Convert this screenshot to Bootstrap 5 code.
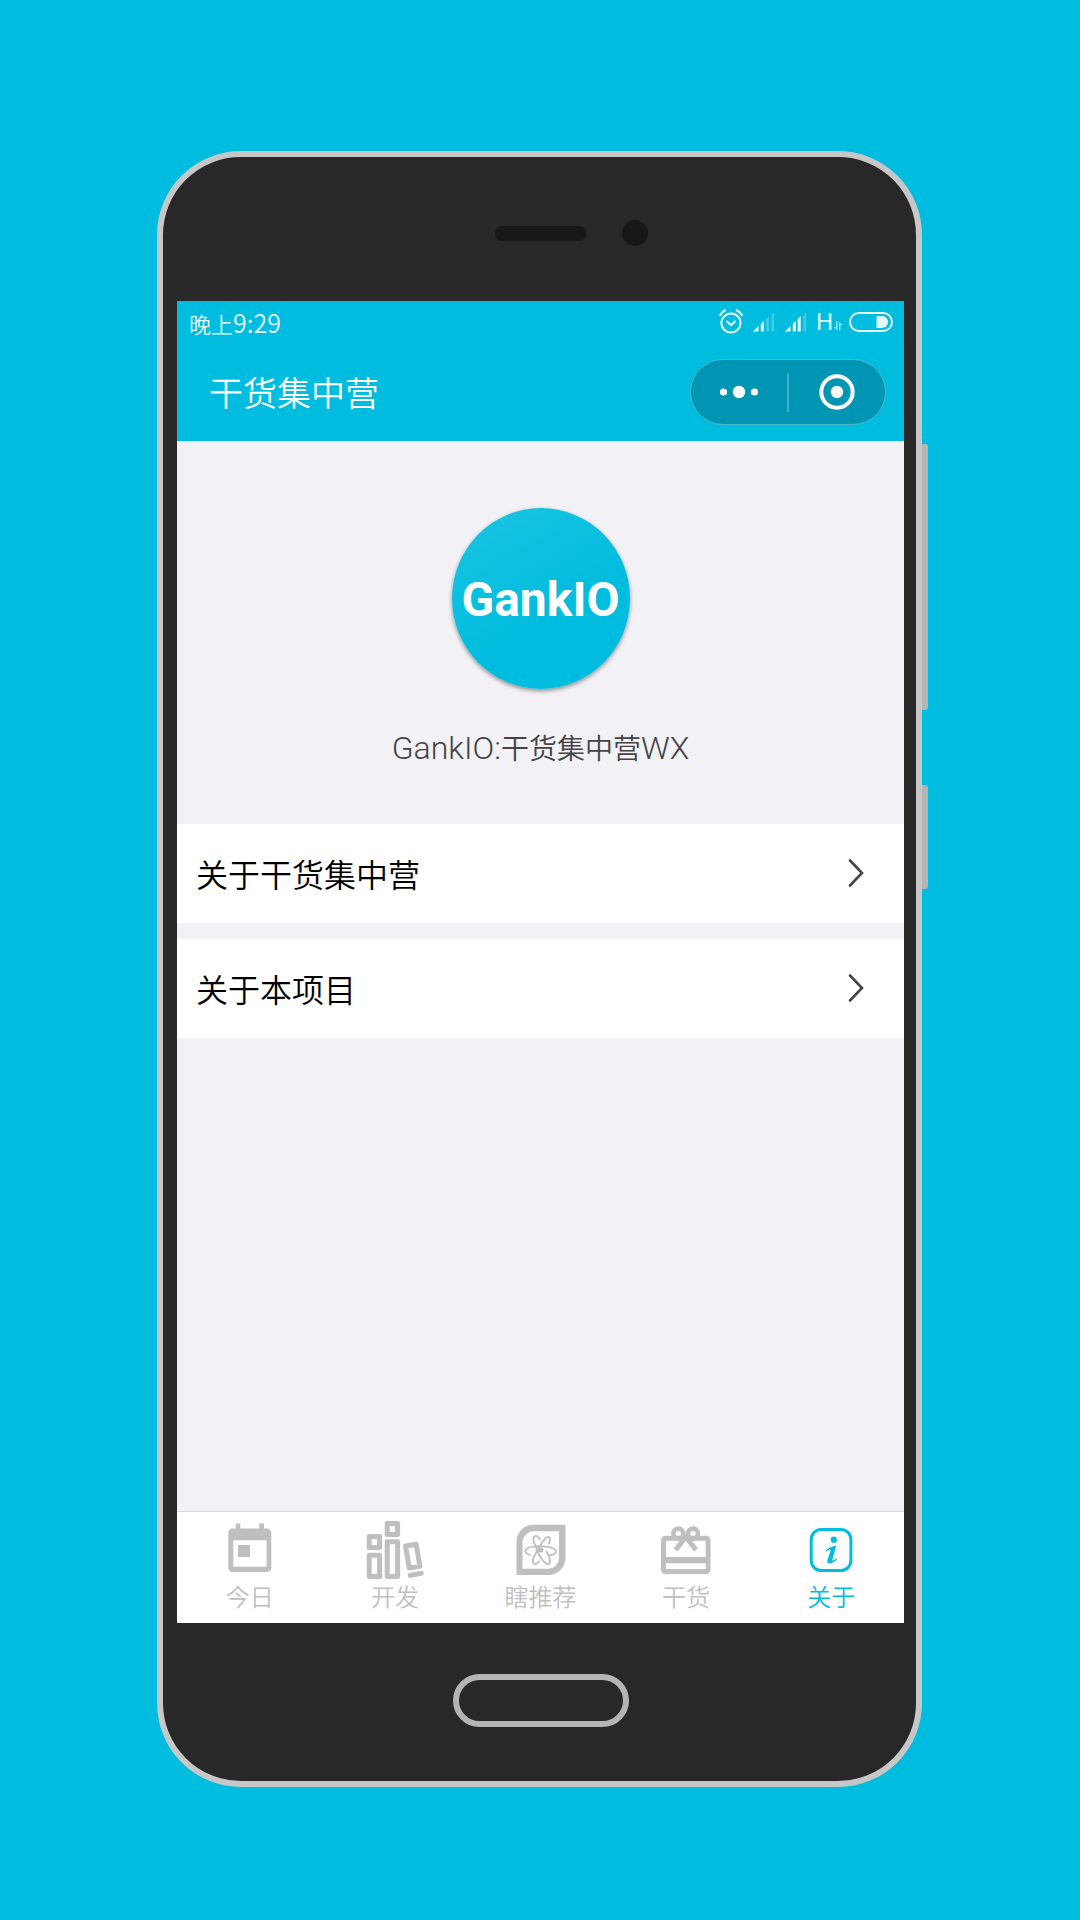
<!DOCTYPE html>
<html lang="zh-CN">
<head>
<meta charset="utf-8">
<meta name="viewport" content="width=device-width, initial-scale=1">
<title>干货集中营</title>
<link href="https://cdn.jsdelivr.net/npm/bootstrap@5.3.0/dist/css/bootstrap.min.css" rel="stylesheet">
<style>
  :root { --gank: #00bcde; --bezel: #282828; --muted-tab: #bfbfbf; }
  body { background: var(--gank); font-family: "Noto Sans CJK SC", sans-serif; font-weight: 350; }
  .stage { min-height: 100vh; padding: 151px 158px 133px 157px; }
  .handset { background: var(--bezel); border: 6px solid #c7c7c7; border-radius: 84px; padding: 0 12px 0 14px; }
  .side-key { left: calc(100% + 6px); width: 6px; background: #b5b5b5; border-radius: 0 3px 3px 0; }
  .volume-key { top: 287px; height: 266px; }
  .power-key { top: 628px; height: 104px; }
  .forehead { display: grid; grid-template-columns: 1fr auto 1fr; align-items: center; height: 144px; padding-top: 8px; }
  .earpiece { grid-column: 2; width: 91px; height: 15px; border-radius: 7px; background: #171717; }
  .lens { width: 26px; height: 26px; margin-left: 36px; border-radius: 50%; background: #171717; }
  .chin { height: 158px; padding-bottom: 4px; }
  .home-key { width: 176px; height: 53px; border: 6px solid #b5b5b5; border-radius: 27px; background: transparent; }
  .app-screen { background: #f1f1f6; }
  .app-top { background: var(--gank); color: #fff; height: 140px; }
  .status-line { height: 42px; padding: 0 10px 0 12px; font-size: 22px; line-height: 42px; color: #e8f9fc; }
  .status-line .digits { font-size: 25px; }
  .net-type { font-family: Roboto, sans-serif; font-size: 24px; font-weight: 400; }
  .title-line { height: 98px; padding: 0 18px 0 32px; }
  .app-title { font-size: 34px; line-height: 50px; font-weight: 350; margin: 0; }
  .capsule { width: 196px; height: 66px; border: 1px solid #4db5ca; border-radius: 33px; background: #0095b2; }
  .capsule button { border: 0; background: transparent; padding: 0; line-height: 0; flex: 1 1 0; }
  .capsule .split { width: 2px; height: 39px; background: #40b0c6; }
  .profile { height: 383px; padding-top: 67px; }
  .logo-disc { width: 178px; height: 181px; border-radius: 50%; background: linear-gradient(150deg, #1cc4e2, var(--gank) 60%); box-shadow: 0 2px 4px rgba(0,0,0,.4); color: #fff; font: 700 48px/60px Roboto, sans-serif; padding-top: 3px; }
  .app-name { margin: 37px 0 0; font-size: 28px; line-height: 42px; color: #444; }
  .app-name .latin { font-family: Roboto, sans-serif; font-size: 32px; font-weight: 300; }
  .menu-row { height: 99px; padding: 0 40px 2px 19px; background: #fff; color: #000; font-size: 32px; }
  .menu-row svg { color: #444; }
  .tab-strip { height: 112px; background: #fff; border-top: 1px solid #d9d9dc; }
  .tab-strip a { color: var(--muted-tab); font-size: 24px; line-height: 32px; padding-top: 8px; }
  .tab-strip a.active { color: var(--gank); }
  svg { display: block; fill: currentColor; }
  .line-art { fill: none; stroke: currentColor; }
</style>
</head>
<body>
<div class="stage d-flex">
  <div class="handset position-relative flex-fill d-flex flex-column">
    <div class="side-key volume-key position-absolute"></div>
    <div class="side-key power-key position-absolute"></div>
    <div class="forehead"><div class="earpiece"></div><div class="lens"></div></div>

    <div class="app-screen flex-fill d-flex flex-column">
      <header class="app-top">
        <div class="status-line d-flex justify-content-between align-items-center">
          <div>晚上<span class="digits">9:29</span></div>
          <div class="d-flex align-items-center">
            <svg class="me-2" width="26" height="28" viewBox="0 0 26 28"><g class="line-art" stroke-width="2" stroke-linecap="round"><circle cx="13" cy="15" r="9.6"/><path d="M9 13.5l4 3.6 4-3.6M2 7.2Q4 3.500 7.300 2.300M24 7.200Q22 3.500 18.700 2.300"/></g></svg>
            <svg class="me-2" width="24" height="22" viewBox="0 0 24 22"><path d="M1 20.500L6.500 15v5.500zM8.800 13l3-3v10.500h-3z"/><path opacity=".25" d="M14 8l3-3v15.500h-3zM19.300 4l3-3v19.500h-3z"/></svg>
            <svg class="me-2" width="24" height="22" viewBox="0 0 24 22"><path d="M1 20.500L6.500 15v5.500zM8.800 13l3-3v10.500h-3zM13.700 8l3-3v15.500h-3z"/><path opacity=".25" d="M19.300 4l3-3v19.500h-3z"/></svg>
            <span class="net-type">H</span>
            <svg class="me-1 mt-2" width="11" height="10" viewBox="0 0 11 10" opacity=".6"><path d="M3 0h1.500v9.500L.5 6H3zM6 .5L9.500 4H7.500v5.500H6z"/></svg>
            <svg width="46" height="22" viewBox="0 0 46 22"><rect class="line-art" x="2" y="2" width="42" height="18" rx="9" stroke-width="2"/><path d="M28.500 5H34a6 6 0 0 1 0 12h-5.500z"/></svg>
          </div>
        </div>
        <div class="title-line d-flex justify-content-between align-items-center">
          <h1 class="app-title">干货集中营</h1>
          <div class="capsule d-flex align-items-center">
            <button type="button" class="d-flex justify-content-center text-white" aria-label="更多">
              <svg width="40" height="14" viewBox="0 0 40 14"><circle cx="4.500" cy="7" r="3.600"/><circle cx="20" cy="7" r="6.200"/><circle cx="35.500" cy="7" r="3.600"/></svg>
            </button>
            <div class="split"></div>
            <button type="button" class="d-flex justify-content-center text-white" aria-label="关闭">
              <svg width="38" height="38" viewBox="0 0 38 38"><circle class="line-art" cx="19" cy="19" r="15.700" stroke-width="4"/><circle cx="19" cy="19" r="6.200"/></svg>
            </button>
          </div>
        </div>
      </header>

      <main class="flex-fill">
        <section class="profile d-flex flex-column align-items-center">
          <div class="logo-disc d-flex justify-content-center align-items-center">GankIO</div>
          <p class="app-name"><span class="latin">GankIO:</span>干货集中营<span class="latin">WX</span></p>
        </section>
        <nav class="d-flex flex-column gap-3">
          <a href="#gank" class="menu-row d-flex justify-content-between align-items-center text-decoration-none">关于干货集中营
            <svg width="16" height="28" viewBox="0 0 16 28"><path class="line-art" stroke-width="2.600" stroke-linecap="round" d="M2 1.500L14 14 2 26.500"/></svg></a>
          <a href="#project" class="menu-row d-flex justify-content-between align-items-center text-decoration-none">关于本项目
            <svg width="16" height="28" viewBox="0 0 16 28"><path class="line-art" stroke-width="2.600" stroke-linecap="round" d="M2 1.500L14 14 2 26.500"/></svg></a>
        </nav>
      </main>

      <nav class="tab-strip nav nav-fill flex-nowrap">
        <a href="#today" class="col d-flex flex-column align-items-center text-decoration-none">
          <svg width="60" height="60" viewBox="0 0 60 60"><path fill-rule="evenodd" d="M12.300 8.500h3.400v-5h4.600v5h19v-5H44v5h3a4.300 4.300 0 0 1 4.300 4.300v35A4.300 4.300 0 0 1 47 52H12.500a4.300 4.300 0 0 1-4.200-4.200v-35a4.300 4.300 0 0 1 4-4.300zM13.300 20.300v26.400h33.300V20.300zM18 25h12v12H18z"/></svg>今日</a>
        <a href="#dev" class="col d-flex flex-column align-items-center text-decoration-none">
          <svg width="60" height="60" viewBox="0 0 60 60"><g class="line-art" stroke-width="5" stroke-linejoin="round"><path d="M4.200 16.500h10.400v11H4.200zM4.200 35.200h10.400v21.300H4.200zM22.200 3.500h10.400v11H22.200zM22.200 21.800h10.400v34.700H22.200zM40.600 26l10.600-1.700 3.700 22L44.200 48z"/><path stroke-linecap="round" d="M45.300 55.400l10.900-2.200"/></g></svg>开发</a>
        <a href="#recommend" class="col d-flex flex-column align-items-center text-decoration-none">
          <svg width="60" height="60" viewBox="0 0 60 60"><path fill-rule="evenodd" d="M5.500 55V22A17 17 0 0 1 22.500 4.700h32V38A17 17 0 0 1 37.500 55zM11.500 48.700H37A11 11 0 0 0 48 37.700V11.300H23A11.500 11.500 0 0 0 11.500 22.800z"/><circle cx="29.800" cy="30" r="2.600"/><g class="line-art" stroke-width="1.800" stroke-linecap="round"><path d="M20 26.800C31 25 45 27.500 45 31.500c0 2-3.500 3.500-7 4M19 35c-6-2-6-5.500-1-7.500M24.500 34C29 25 35 15.500 38 17c1.500.8 1 4 0 6.500M28 41.500c-4 5.500-7.500 2-5.500-4 .5-1.500 1.200-2.500 2-3.500M27 31c-4.500-7.500-6-14-3-15 1.800-.4 4 1.800 5 3.500M35.500 31.500c4 7 4.500 12 2 12.500C34 44.500 29 37 25.500 30"/></g></svg>瞎推荐</a>
        <a href="#goods" class="col d-flex flex-column align-items-center text-decoration-none">
          <svg width="60" height="60" viewBox="0 0 60 60"><path fill-rule="evenodd" d="M9.500 15.700H50a4.500 4.500 0 0 1 4.500 4.500v29.300A4.500 4.500 0 0 1 50 54H9.500A4.500 4.500 0 0 1 5 49.500V20.200a4.500 4.500 0 0 1 4.500-4.500zM10 20.700V37h39.700V20.700zM10 43.300V49h39.700v-5.700z"/><g class="line-art" stroke-width="4.600"><circle cx="22.300" cy="13.600" r="5"/><circle cx="37" cy="13.600" r="5"/><path stroke-width="5" d="M31 15L19.700 30M28.500 15L40 30"/></g></svg>干货</a>
        <a href="#about" class="active col d-flex flex-column align-items-center text-decoration-none" aria-current="page">
          <svg width="60" height="60" viewBox="0 0 60 60"><rect class="line-art" x="10.200" y="9.500" width="39.700" height="41" rx="10" stroke-width="3"/><circle cx="32.800" cy="19.700" r="3.100"/><path d="M24.800 30.200C28 27.800 31 26.200 35.300 25.500L31.300 39.700C31 41 33 40.500 35.600 38.600L36 39.500C33 42 30 43.600 27.900 43.500 26.300 43.300 26 42 26.400 40.300L29.500 30.500C29.800 29.300 28 29.800 25.400 31.200Z"/></svg>关于</a>
      </nav>
    </div>

    <div class="chin d-flex justify-content-center align-items-center"><button type="button" class="home-key" aria-label="主页"></button></div>
  </div>
</div>
<script src="https://cdn.jsdelivr.net/npm/bootstrap@5.3.0/dist/js/bootstrap.bundle.min.js"></script>
</body>
</html>
